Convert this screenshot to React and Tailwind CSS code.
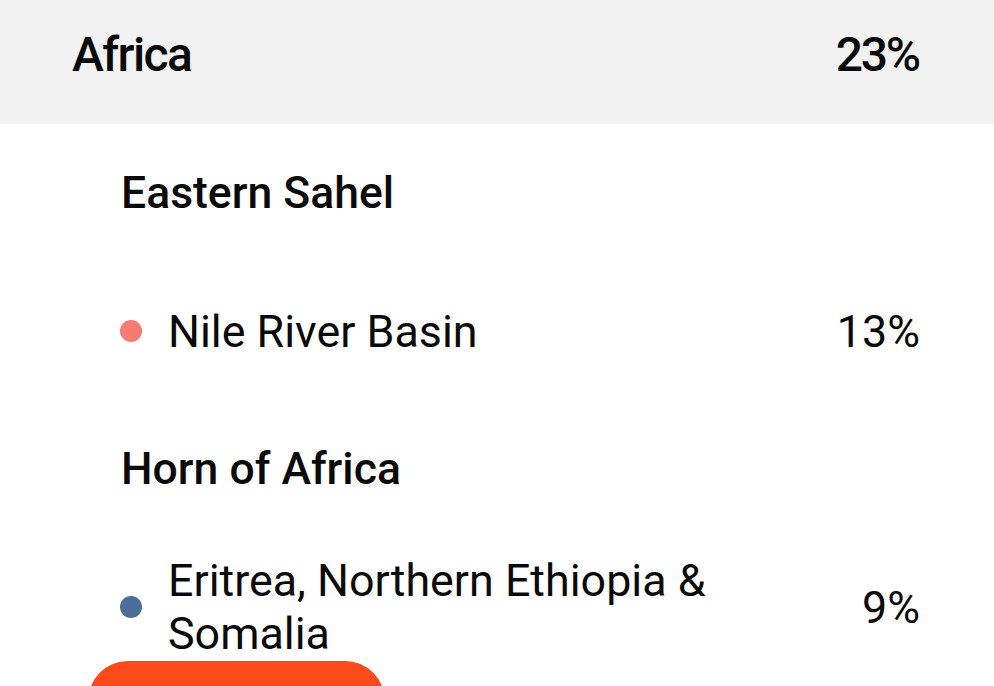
import React from 'react';

const groups = [
  {
    title: 'Eastern Sahel',
    items: [{ name: 'Nile River Basin', pct: '13%', color: 'bg-[#f77b6e]' }],
  },
  {
    title: 'Horn of Africa',
    items: [{ name: 'Eritrea, Northern Ethiopia & Somalia', pct: '9%', color: 'bg-[#4a6e98]' }],
  },
];

const Row = ({ item }) => (
  <div className="h-[138px] flex items-center pl-[120px] pr-[74px]">
    <div className={`w-[22px] h-[22px] rounded-full shrink-0 ${item.color}`} />
    <div className="ml-[26px] w-[560px] text-[44.8px] leading-[53px] text-[#0a0a0a]">{item.name}</div>
    <div className="ml-auto text-[44.8px] leading-[53px] text-[#0a0a0a]">{item.pct}</div>
  </div>
);

export default function App() {
  return (
    <div
      className="relative w-[994px] h-[686px] overflow-hidden bg-white"
      style={{ fontFamily: 'Roboto, "Liberation Sans", sans-serif' }}
    >
      <div className="h-[124px] bg-[#f2f2f2] flex items-start pt-[27px] pl-[72px] pr-[75px]">
        <div className="text-[48px] leading-[56px] font-medium tracking-[-1.6px] text-[#0a0a0a]">Africa</div>
        <div className="ml-auto text-[48px] leading-[56px] font-medium tracking-[-2.2px] text-[#0a0a0a]">23%</div>
      </div>
      {groups.map((g) => (
        <div key={g.title}>
          <div className="h-[138px] flex items-center pl-[121px]">
            <div className="text-[44.5px] leading-[53px] font-medium text-[#0a0a0a]">{g.title}</div>
          </div>
          {g.items.map((it) => (
            <Row key={it.name} item={it} />
          ))}
        </div>
      ))}
      <button className="absolute left-[88px] top-[661px] w-[297px] h-[80px] rounded-[44px] bg-[#fc4a1a]" />
    </div>
  );
}
